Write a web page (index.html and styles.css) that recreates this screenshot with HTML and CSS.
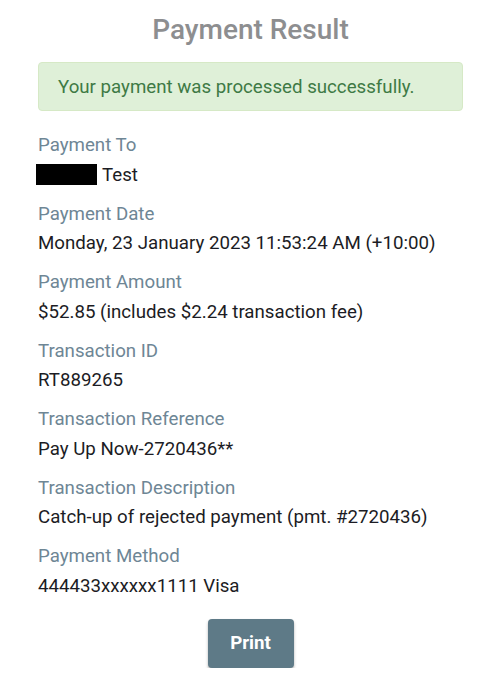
FILE: index.html
```html
<!DOCTYPE html>
<html lang="en">
<head>
<meta charset="utf-8">
<title>Payment Result</title>
<link rel="stylesheet" href="styles.css">
</head>
<body>
<main class="page">
  <h1 class="title">Payment Result</h1>
  <div class="alert">Your payment was processed successfully.</div>
  <dl class="details">
    <div class="item">
      <dt class="label">Payment To</dt>
      <dd class="value"><span class="redact"></span>Test</dd>
    </div>
    <div class="item">
      <dt class="label">Payment Date</dt>
      <dd class="value">Monday, 23 January 2023 11:53:24 AM (+10:00)</dd>
    </div>
    <div class="item">
      <dt class="label">Payment Amount</dt>
      <dd class="value">$52.85 (includes $2.24 transaction fee)</dd>
    </div>
    <div class="item">
      <dt class="label">Transaction ID</dt>
      <dd class="value">RT889265</dd>
    </div>
    <div class="item">
      <dt class="label">Transaction Reference</dt>
      <dd class="value">Pay Up Now-2720436**</dd>
    </div>
    <div class="item">
      <dt class="label">Transaction Description</dt>
      <dd class="value">Catch-up of rejected payment (pmt. #2720436)</dd>
    </div>
    <div class="item">
      <dt class="label">Payment Method</dt>
      <dd class="value">444433xxxxxx1111 Visa</dd>
    </div>
  </dl>
  <div class="actions">
    <button class="btn" type="button">Print</button>
  </div>
</main>
</body>
</html>
```
FILE: styles.css
```css
html, body {
  margin: 0;
  padding: 0;
  background: #ffffff;
}
body {
  font-family: Roboto, "Liberation Sans", sans-serif;
  color: #1f1f1f;
}
.page {
  width: 425px;
  margin: 0 0 0 38px;
  padding-top: 10px;
}
.title {
  margin: 0;
  text-align: center;
  font-size: 28px;
  font-weight: 500;
  line-height: 40px;
  color: #8d8e90;
}
.alert {
  margin-top: 12px;
  box-sizing: border-box;
  height: 49px;
  padding: 0 19px;
  display: flex;
  align-items: center;
  background: #dff0d8;
  border: 1px solid #d6e9c6;
  border-radius: 4px;
  color: #3e7a45;
  font-size: 18.7px;
}
.details {
  margin: 23px 0 0 0;
  display: flex;
  flex-direction: column;
  gap: 17px;
}
.item {
  display: flex;
  flex-direction: column;
  gap: 7.5px;
}
.label {
  font-size: 18.7px;
  line-height: 22px;
  color: #6e8695;
}
.value {
  margin: 0;
  font-size: 18.7px;
  line-height: 22px;
  color: #1c1c24;
  display: flex;
  align-items: center;
}
.redact {
  display: inline-block;
  width: 61px;
  height: 21px;
  background: #000;
  margin-left: -2px;
  margin-right: 5px;
}
.actions {
  display: flex;
  justify-content: center;
  margin-top: 22px;
}
.btn {
  width: 86px;
  height: 49px;
  border: none;
  border-radius: 4px;
  background: #5e7a87;
  color: #fff;
  font-family: Roboto, "Liberation Sans", sans-serif;
  font-size: 18.7px;
  font-weight: 700;
  box-shadow: 0 2px 3px rgba(0,0,0,0.3);
}
```
